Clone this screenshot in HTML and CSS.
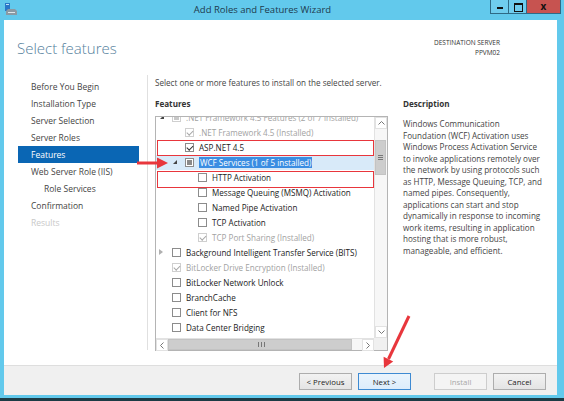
FILE: index.html
```html
<!DOCTYPE html>
<html lang="en">
<head>
    <meta charset="UTF-8">
    <title>Add Roles and Features Wizard</title>
    <link rel="stylesheet" href="styles.css">
</head>
<body>
    <div class="titlebar">
        <svg class="app-icon" viewBox="0 0 12 13">
            <rect x="0" y="0" width="5" height="8" fill="#2a78c8"/>
            <rect x="1" y="1" width="3" height="1" fill="#bfe3f7"/>
            <path d="M1 8 L3 6 L10 6 L12 8 L12 12 L1 12 Z" fill="#8a9aa4"/>
            <rect x="3" y="9" width="7" height="1" fill="#dfe7ec"/>
        </svg>
        <span class="title">Add Roles and Features Wizard</span>
        <div class="controls">
            <span class="ctl min"></span>
            <span class="ctl max"></span>
            <span class="ctl close">x</span>
        </div>
    </div>

    <div class="window">
        <div class="header">
            <h1>Select features</h1>
            <div class="dest">
                <div>DESTINATION SERVER</div>
                <div>PPVM02</div>
            </div>
        </div>

        <div class="main">
            <ul class="nav">
                <li>Before You Begin</li>
                <li>Installation Type</li>
                <li>Server Selection</li>
                <li>Server Roles</li>
                <li class="on">Features</li>
                <li>Web Server Role (IIS)</li>
                <li class="sub">Role Services</li>
                <li>Confirmation</li>
                <li class="off">Results</li>
            </ul>
            <div class="sep"></div>
            <div class="content">
                <p class="intro">Select one or more features to install on the selected server.</p>
                <div class="cols">
                    <div class="col-left">
                        <div class="label">Features</div>
                        <div class="tree">
                            <div class="rows">
                                <ul class="list">
                                    <li class="row l0 dis"><span class="exp open"></span><span class="cb part"></span>.NET Framework 4.5 Features (2 of 7 installed)</li>
                                    <li class="row l1 dis"><span class="exp"></span><span class="cb on"></span>.NET Framework 4.5 (Installed)</li>
                                    <li class="row l1"><span class="exp"></span><span class="cb on"></span>ASP.NET 4.5</li>
                                    <li class="row l1 sel"><span class="exp open"></span><span class="cb part"></span><span class="hl">WCF Services (1 of 5 installed)</span></li>
                                    <li class="row l2"><span class="exp"></span><span class="cb"></span>HTTP Activation</li>
                                    <li class="row l2"><span class="exp"></span><span class="cb"></span>Message Queuing (MSMQ) Activation</li>
                                    <li class="row l2"><span class="exp"></span><span class="cb"></span>Named Pipe Activation</li>
                                    <li class="row l2"><span class="exp"></span><span class="cb"></span>TCP Activation</li>
                                    <li class="row l2 dis"><span class="exp"></span><span class="cb on"></span>TCP Port Sharing (Installed)</li>
                                    <li class="row l0"><span class="exp shut"></span><span class="cb"></span>Background Intelligent Transfer Service (BITS)</li>
                                    <li class="row l0 dis"><span class="exp"></span><span class="cb on"></span>BitLocker Drive Encryption (Installed)</li>
                                    <li class="row l0"><span class="exp"></span><span class="cb"></span>BitLocker Network Unlock</li>
                                    <li class="row l0"><span class="exp"></span><span class="cb"></span>BranchCache</li>
                                    <li class="row l0"><span class="exp"></span><span class="cb"></span>Client for NFS</li>
                                    <li class="row l0"><span class="exp"></span><span class="cb"></span>Data Center Bridging</li>
                                </ul>
                            </div>
                            <div class="vscroll">
                                <span class="sb-btn">
                                    <svg viewBox="0 0 7 4"><polyline points="0.5,3.5 3.5,0.5 6.5,3.5"/></svg>
                                </span>
                                <div class="vtrack"><div class="vthumb"></div></div>
                                <span class="sb-btn">
                                    <svg viewBox="0 0 7 4"><polyline points="0.5,0.5 3.5,3.5 6.5,0.5"/></svg>
                                </span>
                            </div>
                            <div class="hscroll">
                                <span class="sb-btn">
                                    <svg viewBox="0 0 4 7"><polyline points="3.5,0.5 0.5,3.5 3.5,6.5"/></svg>
                                </span>
                                <div class="hthumb"></div>
                                <div class="htrack"></div>
                                <span class="sb-btn">
                                    <svg viewBox="0 0 4 7"><polyline points="0.5,0.5 3.5,3.5 0.5,6.5"/></svg>
                                </span>
                            </div>
                            <div class="corner"></div>
                            <div class="mark mark-asp"></div>
                            <div class="mark mark-http"></div>
                        </div>
                    </div>
                    <div class="col-right">
                        <div class="label">Description</div>
                        <p class="desc">Windows Communication Foundation (WCF) Activation uses Windows Process Activation Service to invoke applications remotely over the network by using protocols such as HTTP, Message Queuing, TCP, and named pipes. Consequently, applications can start and stop dynamically in response to incoming work items, resulting in application hosting that is more robust, manageable, and efficient.</p>
                    </div>
                </div>
            </div>
        </div>

        <div class="footer">
            <button class="btn">&lt; Previous</button>
            <button class="btn focus">Next &gt;</button>
            <button class="btn gap" disabled>Install</button>
            <button class="btn">Cancel</button>
        </div>
    </div>
    <div class="edge"></div>
    <div class="taskbar"></div>

    <!-- callout arrows drawn on top of the dialog -->
    <svg class="arrows" viewBox="0 0 564 401">
        <line x1="137" y1="163" x2="158" y2="163"/>
        <polygon points="157,157.5 168,163 157,168.5"/>
        <line x1="409" y1="316" x2="388.5" y2="359"/>
        <polygon points="393.2,361.4 384,368 383.6,356.8"/>
    </svg>
</body>
</html>
```

FILE: styles.css
```css
* {
    margin: 0;
    padding: 0;
    box-sizing: border-box;
}

li {
    list-style: none;
}

body {
    position: relative;
    width: 564px;
    height: 401px;
    overflow: hidden;
    background: #62c9ec;
    font-family: "Open Sans", "Noto Sans", sans-serif;
    color: #333;
}

/* title bar */
.titlebar {
    height: 20px;
    display: flex;
    align-items: flex-start;
}

.app-icon {
    width: 12px;
    height: 13px;
    margin: 3px 0 0 5px;
}

.title {
    flex: 1;
    padding-left: 18px;
    text-align: center;
    font-size: 9.5px;
    line-height: 19px;
    color: #1d3a4c;
}

.controls {
    display: flex;
    height: 14px;
    margin-right: 3px;
    border: 1px solid #2e6a86;
    border-top: 0;
}

.ctl {
    position: relative;
    width: 18px;
    border-right: 1px solid #2e6a86;
    background: #6fcdee;
}

.ctl.min::after {
    content: "";
    position: absolute;
    left: 6px;
    top: 7px;
    width: 6px;
    height: 2px;
    background: #111;
}

.ctl.max::after {
    content: "";
    position: absolute;
    left: 5px;
    top: 3px;
    width: 7px;
    height: 6px;
    border: 1px solid #111;
    border-top-width: 2px;
}

.ctl.close {
    width: 33px;
    border-right: 0;
    background: #c75350;
    text-align: center;
    font-size: 10px;
    font-weight: bold;
    line-height: 12px;
    color: #111;
}

/* dialog body */
.window {
    height: 375px;
    margin: 0 7px 0 4px;
    background: #fff;
    display: flex;
    flex-direction: column;
}

.header {
    height: 50px;
    display: flex;
    justify-content: space-between;
    padding: 0 57px 0 13px;
}

.header h1 {
    padding-top: 18px;
    font-size: 15px;
    font-weight: 300;
    line-height: 20px;
    color: #55809c;
}

.dest {
    padding-top: 18px;
    text-align: right;
    font-size: 6.5px;
    line-height: 10px;
    color: #333;
}

.main {
    flex: 1;
    display: flex;
}

.nav {
    width: 143px;
    padding: 8px 0 0 14px;
    font-size: 8.5px;
    color: #444;
}

.nav li {
    width: 121px;
    height: 17px;
    line-height: 17px;
    padding-left: 13px;
}

.nav li.on {
    background: #0a66b4;
    color: #fff;
}

.nav li.sub {
    padding-left: 26px;
}

.nav li.off {
    color: #c8c8c8;
}

.sep {
    width: 1px;
    margin: 5px 0 15px;
    background: #e0e0e0;
}

.content {
    flex: 1;
    padding: 7px 0 0 7px;
    font-size: 8.1px;
}

.intro {
    line-height: 12px;
    color: #444;
}

.cols {
    display: flex;
    gap: 15px;
    margin-top: 9px;
}

.label {
    font-weight: bold;
    line-height: 12px;
    color: #333;
}

.col-right {
    width: 139px;
}

.desc {
    margin-top: 8px;
    line-height: 11.5px;
    color: #444;
}

/* feature tree */
.tree {
    position: relative;
    width: 233px;
    height: 235px;
    margin-top: 6px;
    border: 1px solid #b4b4b4;
    display: grid;
    grid-template-columns: 1fr 13px;
    grid-template-rows: 1fr 12px;
}

.rows {
    overflow: hidden;
}

.list {
    margin-top: -7px;
}

.row {
    height: 15px;
    display: flex;
    align-items: center;
    white-space: nowrap;
    color: #222;
}

.row.l0 { padding-left: 0; }
.row.l1 { padding-left: 13px; }
.row.l2 { padding-left: 26px; }

.row.dis {
    color: #a2a2a2;
}

.row.sel {
    background: #d8eaf9;
}

.hl {
    padding: 0 1px;
    background: #3a8de2;
    color: #fff;
    line-height: 11px;
}

.exp {
    position: relative;
    width: 16px;
    height: 15px;
}

.exp.open::after {
    content: "";
    position: absolute;
    left: 4px;
    top: 5px;
    border-left: 4px solid transparent;
    border-bottom: 4px solid #444;
}

.exp.shut::after {
    content: "";
    position: absolute;
    left: 3px;
    top: 4px;
    width: 0;
    height: 0;
    border-top: 3.5px solid transparent;
    border-bottom: 3.5px solid transparent;
    border-left: 4px solid #b0b0b0;
}

.cb {
    position: relative;
    flex: none;
    width: 9px;
    height: 9px;
    margin-right: 5px;
    border: 1px solid #8c8c8c;
    background: #fff;
}

.dis .cb {
    border-color: #cfcfcf;
}

.cb.on::after {
    content: "";
    position: absolute;
    left: 2px;
    top: 0;
    width: 2.5px;
    height: 5px;
    border: solid #333;
    border-width: 0 1.3px 1.3px 0;
    transform: rotate(45deg);
}

.dis .cb.on::after {
    border-color: #a8a8a8;
}

.cb.part::after {
    content: "";
    position: absolute;
    left: 1px;
    top: 1px;
    width: 5px;
    height: 5px;
    background: #8a8a8a;
}

.dis .cb.part::after {
    background: #c8c8c8;
}

/* scrollbars */
.vscroll {
    display: flex;
    flex-direction: column;
    border-left: 1px solid #e2e2e2;
    background: #f7f7f7;
}

.hscroll {
    display: flex;
    border-top: 1px solid #e2e2e2;
    background: #f7f7f7;
}

.sb-btn {
    flex: none;
    width: 12px;
    height: 12px;
    display: flex;
    align-items: center;
    justify-content: center;
    background: #fff;
    border: 1px solid #e2e2e2;
}

.vscroll .sb-btn svg {
    width: 7px;
    height: 4px;
}

.hscroll .sb-btn svg {
    width: 4px;
    height: 7px;
}

.sb-btn polyline {
    fill: none;
    stroke: #777;
    stroke-width: 1;
}

.vtrack {
    flex: 1;
}

.vthumb {
    width: 11px;
    height: 35px;
    margin-top: 11px;
    background: #cdcdcd linear-gradient(#777, #777) center / 5px 1px no-repeat;
    border: 1px solid #c3c3c3;
    position: relative;
}

.vthumb::before,
.vthumb::after {
    content: "";
    position: absolute;
    left: 2px;
    width: 5px;
    height: 1px;
    background: #777;
    top: 14px;
}

.vthumb::after {
    top: 18px;
}

.hthumb {
    width: 184px;
    background: #cdcdcd;
    border: 1px solid #c3c3c3;
    position: relative;
}

.hthumb::after {
    content: "";
    position: absolute;
    left: 89px;
    top: 2px;
    width: 5px;
    height: 5px;
    border-left: 1px solid #777;
    border-right: 1px solid #777;
    background: linear-gradient(#777, #777) center / 1px 5px no-repeat;
}

.htrack {
    flex: 1;
}

.corner {
    background: #f0f0f0;
}

/* red highlight boxes */
.mark {
    position: absolute;
    left: 1px;
    width: 217px;
    border: 1.5px solid #e8363c;
}

.mark-asp {
    top: 23px;
    height: 16px;
}

.mark-http {
    top: 54px;
    height: 17px;
}

/* footer buttons */
.footer {
    height: 30px;
    display: flex;
    justify-content: flex-end;
    gap: 6px;
    padding: 7px 11px 0 0;
    border-top: 1px solid #dedede;
    background: #f0f0f0;
}

.btn {
    width: 53px;
    height: 17px;
    font-family: inherit;
    font-size: 7.8px;
    color: #222;
    border: 1px solid #adadad;
    background: linear-gradient(#f2f2f2, #e4e4e4);
}

.btn.focus {
    border-color: #3e8ad2;
    background: linear-gradient(#eaf4fc, #dcecfc);
}

.btn.gap {
    margin-left: 17px;
}

.btn:disabled {
    color: #a8a8a8;
    border-color: #cdcdcd;
    background: #f4f4f4;
}

.edge {
    height: 3px;
}

.taskbar {
    height: 3px;
    background: #1c3b45;
}

.arrows {
    position: absolute;
    left: 0;
    top: 0;
    width: 564px;
    height: 401px;
    pointer-events: none;
}

.arrows line {
    stroke: #e8363c;
    stroke-width: 3;
}

.arrows polygon {
    fill: #e8363c;
}
```
